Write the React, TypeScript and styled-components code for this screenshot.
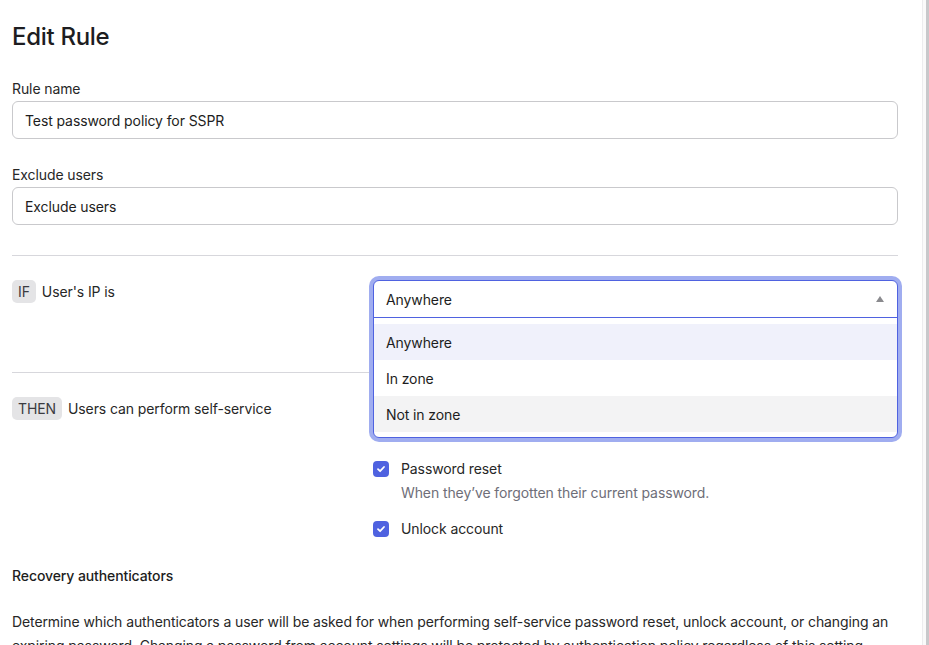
import React from 'react';
import styled, { createGlobalStyle } from 'styled-components';

const GlobalStyle = createGlobalStyle`
    html, body {
        margin: 0;
        padding: 0;
        background: #fff;
    }

    body {
        font-family: Inter, 'Noto Sans', sans-serif;
        color: #1d1d21;
        letter-spacing: -0.1px;
        -webkit-font-smoothing: antialiased;
    }
`;

const options = ['Anywhere', 'In zone', 'Not in zone'];

const CheckIcon = () => (
    <svg width="10" height="10" viewBox="0 0 10 10" fill="none">
        <path d="M2 5.2L4.1 7.2L8 3" stroke="#fff" strokeWidth="1.8" strokeLinecap="round" strokeLinejoin="round" />
    </svg>
);

export default function App() {
    return (
        <>
            <GlobalStyle />
            <Page>
                <Main>
                    <Title>Edit Rule</Title>

                    <Field>
                        <Label>Rule name</Label>
                        <TextInput type="text" defaultValue="Test password policy for SSPR" />
                    </Field>

                    <Field>
                        <Label>Exclude users</Label>
                        <TextInput type="text" defaultValue="Exclude users" />
                    </Field>

                    <Divider $top={30} />

                    {/* IF condition */}
                    <RuleRow $minHeight={68}>
                        <Condition>
                            <Badge>IF</Badge>
                            <span>User's IP is</span>
                        </Condition>
                        <SelectSlot>
                            <Combo>
                                <ComboHeader>
                                    <span>Anywhere</span>
                                    <Caret />
                                </ComboHeader>
                                <Menu>
                                    {options.map((opt, i) => (
                                        <Option key={opt} $state={i === 0 ? 'selected' : i === 2 ? 'hover' : 'none'}>
                                            {opt}
                                        </Option>
                                    ))}
                                </Menu>
                            </Combo>
                        </SelectSlot>
                    </RuleRow>

                    <Divider $top={24} />

                    {/* THEN action */}
                    <RuleRow $minHeight={0}>
                        <Condition>
                            <Badge>THEN</Badge>
                            <span>Users can perform self-service</span>
                        </Condition>
                        <CheckList>
                            <CheckItem>
                                <CheckRow>
                                    <CheckBox><CheckIcon /></CheckBox>
                                    Password reset
                                </CheckRow>
                                <Hint>When they’ve forgotten their current password.</Hint>
                            </CheckItem>
                            <CheckItem>
                                <CheckRow>
                                    <CheckBox><CheckIcon /></CheckBox>
                                    Unlock account
                                </CheckRow>
                            </CheckItem>
                        </CheckList>
                    </RuleRow>

                    <SectionTitle>Recovery authenticators</SectionTitle>
                    <Paragraph>
                        Determine which authenticators a user will be asked for when performing self-service password reset, unlock account, or changing an expiring password. Changing a password from account settings will be protected by authentication policy regardless of this setting.
                    </Paragraph>
                </Main>
                <ScrollTrack>
                    <ScrollThumb />
                </ScrollTrack>
            </Page>
        </>
    );
}

const Page = styled.div`
    display: flex;
    width: 929px;
    height: 645px;
    overflow: hidden;
`;

const Main = styled.main`
    flex: 1;
    padding: 21px 24px 0 12px;
    min-width: 0;
`;

const Title = styled.h1`
    margin: 0;
    font-size: 24px;
    line-height: 32px;
    font-weight: 500;
    color: #1d1d21;
    letter-spacing: -0.3px;
`;

const Field = styled.div`
    display: flex;
    flex-direction: column;
    gap: 2px;
    margin-top: 26px;
`;

const Label = styled.label`
    font-size: 14px;
    line-height: 20px;
    color: #272727;
`;

const TextInput = styled.input`
    box-sizing: border-box;
    width: 100%;
    height: 38px;
    padding: 0 12px;
    border: 1px solid #c9c9cc;
    border-radius: 6px;
    font-family: inherit;
    font-size: 14px;
    letter-spacing: -0.1px;
    color: #1d1d21;
    background: #fff;

    &:focus {
        outline: none;
    }
`;

const Divider = styled.hr<{ $top: number }>`
    margin: ${p => p.$top}px 0 24px;
    border: none;
    border-top: 1px solid #d7d7dc;
`;

const RuleRow = styled.div<{ $minHeight: number }>`
    display: grid;
    grid-template-columns: 361px 1fr;
    min-height: ${p => p.$minHeight}px;
`;

const Condition = styled.div`
    display: flex;
    align-items: flex-start;
    gap: 6px;
    font-size: 14px;
    line-height: 23px;
    color: #272727;
`;

const Badge = styled.span`
    display: inline-block;
    padding: 0 6px;
    height: 23px;
    border-radius: 5px;
    background: #e4e4e6;
    color: #3b3b40;
    font-size: 14px;
    line-height: 23px;
`;

const SelectSlot = styled.div`
    position: relative;
    height: 38px;
`;

const Combo = styled.div`
    position: absolute;
    top: 0;
    left: 0;
    right: 0;
    z-index: 2;
    background: #fff;
    border: 1px solid #4f62e0;
    border-radius: 6px;
    box-shadow: 0 0 0 4px #a0adf0;
    overflow: hidden;
`;

const ComboHeader = styled.div`
    display: flex;
    align-items: center;
    justify-content: space-between;
    height: 36px;
    padding: 0 12px;
    border-bottom: 1px solid #4f62e0;
    font-size: 14px;
    color: #1d1d21;
`;

const Caret = styled.span`
    width: 0;
    height: 0;
    border-left: 4px solid transparent;
    border-right: 4px solid transparent;
    border-bottom: 6px solid #8a8a8e;
    margin-right: 1px;
`;

const Menu = styled.ul`
    list-style: none;
    margin: 0;
    padding: 6px 0 5px;
`;

const Option = styled.li<{ $state: 'selected' | 'hover' | 'none' }>`
    height: 36px;
    display: flex;
    align-items: center;
    padding: 0 12px;
    font-size: 14px;
    color: #1d1d21;
    background: ${p => (p.$state === 'selected' ? '#f0f1fb' : p.$state === 'hover' ? '#f3f3f4' : '#fff')};
`;

const CheckList = styled.div`
    display: flex;
    flex-direction: column;
    gap: 16px;
    padding-top: 62px;
`;

const CheckItem = styled.div`
    display: flex;
    flex-direction: column;
    gap: 4px;
`;

const CheckRow = styled.label`
    display: flex;
    align-items: center;
    gap: 12px;
    font-size: 14px;
    line-height: 20px;
    color: #272727;
`;

const CheckBox = styled.span`
    display: flex;
    align-items: center;
    justify-content: center;
    width: 16px;
    height: 16px;
    border-radius: 4px;
    background: #4f62e0;
`;

const Hint = styled.p`
    margin: 0;
    padding-left: 28px;
    font-size: 14px;
    line-height: 20px;
    color: #6e6e78;
`;

const SectionTitle = styled.h3`
    margin: 27px 0 0;
    font-size: 14px;
    line-height: 20px;
    font-weight: 500;
    color: #1d1d21;
`;

const Paragraph = styled.p`
    margin: 24px 0 0;
    font-size: 14px;
    line-height: 24px;
    color: #272727;
`;

const ScrollTrack = styled.div`
    display: flex;
    justify-content: flex-end;
    width: 6px;
    border-left: 1px solid #ececee;
    background: #fafafa;
`;

const ScrollThumb = styled.div`
    width: 3px;
    height: 100%;
    background: #c8c8cb;
`;
